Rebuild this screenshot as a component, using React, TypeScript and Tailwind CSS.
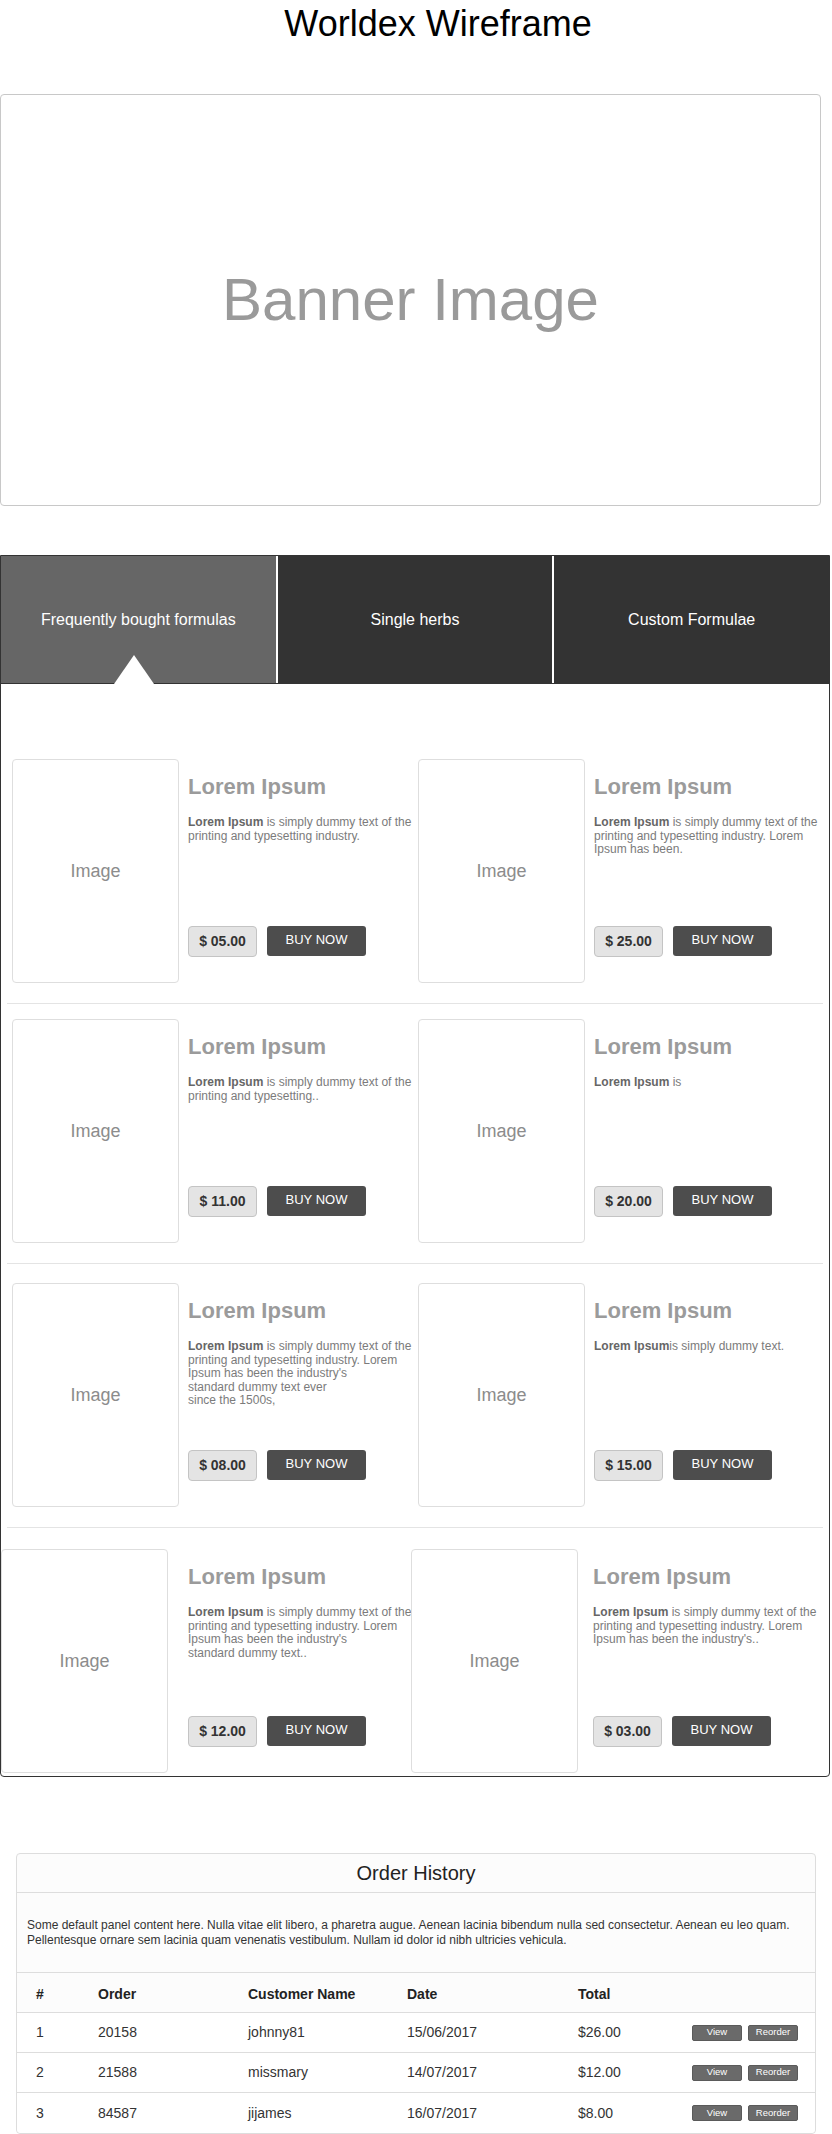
import React from 'react';

type Item = {
  price: string;
  body: React.ReactNode;
  imgCls: string;
  textCls: string;
};

type Row = {
  top: string;
  items: [Item, Item];
};

const L = 'ml-[11px]';
const T = 'ml-[9px]';

const rows: Row[] = [
  {
    top: 'mt-[75px]',
    items: [
      { price: '$ 05.00', imgCls: L, textCls: T, body: <> is simply dummy text of the printing and typesetting industry.</> },
      { price: '$ 25.00', imgCls: L, textCls: T, body: <> is simply dummy text of the printing and typesetting industry. Lorem Ipsum has been.</> },
    ],
  },
  {
    top: 'mt-[15px]',
    items: [
      { price: '$ 11.00', imgCls: L, textCls: T, body: <> is simply dummy text of the printing and typesetting..</> },
      { price: '$ 20.00', imgCls: L, textCls: T, body: <> is</> },
    ],
  },
  {
    top: 'mt-[19px]',
    items: [
      {
        price: '$ 08.00',
        imgCls: L,
        textCls: T,
        body: (
          <>
            {' '}is simply dummy text of the printing and typesetting industry. Lorem Ipsum has been the industry's
            <br />
            standard dummy text ever
            <br />
            since the 1500s,
          </>
        ),
      },
      { price: '$ 15.00', imgCls: L, textCls: T, body: <>is simply dummy text.</> },
    ],
  },
  {
    top: 'mt-[21px]',
    items: [
      {
        price: '$ 12.00',
        imgCls: 'ml-0',
        textCls: 'ml-[20px]',
        body: (
          <>
            {' '}is simply dummy text of the printing and typesetting industry. Lorem Ipsum has been the industry's
            <br />
            standard dummy text..
          </>
        ),
      },
      { price: '$ 03.00', imgCls: 'ml-[4px]', textCls: 'ml-[15px]', body: <> is simply dummy text of the printing and typesetting industry. Lorem Ipsum has been the industry's..</> },
    ],
  },
];

const orders = [
  { n: '1', order: '20158', name: 'johnny81', date: '15/06/2017', total: '$26.00' },
  { n: '2', order: '21588', name: 'missmary', date: '14/07/2017', total: '$12.00' },
  { n: '3', order: '84587', name: 'jijames', date: '16/07/2017', total: '$8.00' },
];

const Card = ({ item }: { item: Item }) => (
  <div className="flex">
    <div className={`${item.imgCls} flex h-[224px] w-[167px] shrink-0 items-center justify-center rounded-[4px] border border-[#dedede] text-[18px] text-[#8c8c8c]`}>
      Image
    </div>
    <div className={`${item.textCls} flex h-[224px] w-[232px] shrink-0 flex-col`}>
      <h3 className="mt-[16px] text-[22px] font-bold leading-[24px] text-[#9b9b9b]">Lorem Ipsum</h3>
      <p className="mt-[17px] text-[12px] leading-[13.5px] text-[#7b7b7b]">
        <b className="text-[#666]">Lorem Ipsum</b>
        {item.body}
      </p>
      <div className="mt-auto mb-[26px] flex items-start gap-[10px]">
        <span className="flex h-[31px] w-[69px] items-center justify-center rounded-[4px] border border-[#c4c4c4] bg-[#e4e4e4] text-[14px] font-bold text-[#333]">
          {item.price}
        </span>
        <span className="flex h-[30px] w-[99px] items-center justify-center rounded-[3px] bg-[#4d4d4d] pb-[2px] text-[13px] text-white">
          BUY NOW
        </span>
      </div>
    </div>
  </div>
);

export default function App() {
  return (
    <div className="w-[832px] bg-white font-['Liberation_Sans',Arial,sans-serif]">
      <h1 className="pt-[4px] pl-[44px] text-center text-[36px] leading-[40px] text-black">Worldex Wireframe</h1>

      {/* Banner */}
      <div className="mt-[50px] flex h-[412px] w-[821px] items-center justify-center rounded-[4px] border border-[#c8c8c8] text-[60px] text-[#9a9a9a]">
        Banner Image
      </div>

      {/* Products panel */}
      <div className="mt-[49px] w-[830px] rounded-b-[4px] border border-[#333]">
        <div className="grid grid-cols-3 gap-[2px] border-b border-[#333]">
          <div className="relative flex h-[127px] items-center justify-center bg-[#666] text-[16px] text-white">
            Frequently bought formulas
            <span className="absolute bottom-[-1px] left-[113px] h-0 w-0 border-x-[20px] border-b-[29px] border-x-transparent border-b-white" />
          </div>
          <div className="flex h-[127px] items-center justify-center bg-[#333] text-[16px] text-white">Single herbs</div>
          <div className="flex h-[127px] items-center justify-center bg-[#333] text-[16px] text-white">Custom Formulae</div>
        </div>

        <div className="pb-[3px]">
          {rows.map((row, i) => (
            <div key={i}>
              {i > 0 && <div className="mx-[6px] mt-[20px] h-px bg-[#e4e4e4]" />}
              <div className={`${row.top} grid grid-cols-[406px_1fr]`}>
                <Card item={row.items[0]} />
                <Card item={row.items[1]} />
              </div>
            </div>
          ))}
        </div>
      </div>

      {/* Order history */}
      <div className="mt-[76px] ml-[16px] w-[800px] rounded-[4px] border border-[#ddd] bg-[#fcfcfc]">
        <div className="flex h-[39px] items-center justify-center border-b border-[#ddd] text-[20px] text-[#222]">Order History</div>
        <p className="px-[10px] pt-[25px] pb-[25px] text-[12px] leading-[14.5px] text-[#333]">
          Some default panel content here. Nulla vitae elit libero, a pharetra augue. Aenean lacinia bibendum nulla sed consectetur. Aenean eu leo quam.
          <br />
          Pellentesque ornare sem lacinia quam venenatis vestibulum. Nullam id dolor id nibh ultricies vehicula.
        </p>
        <div className="grid h-[41px] grid-cols-[62px_150px_159px_171px_114px_1fr] items-center border-y border-[#ddd] pt-[3px] pl-[19px] text-[14px] font-bold text-[#222]">
          <span>#</span>
          <span>Order</span>
          <span>Customer Name</span>
          <span>Date</span>
          <span>Total</span>
          <span />
        </div>
        {orders.map((o, i) => (
          <div
            key={o.n}
            className={`grid h-[40px] grid-cols-[62px_150px_159px_171px_114px_1fr] items-center bg-white pl-[19px] text-[14px] text-[#333] ${i < orders.length - 1 ? 'border-b border-[#ddd]' : 'rounded-b-[4px]'}`}
          >
            <span>{o.n}</span>
            <span>{o.order}</span>
            <span>{o.name}</span>
            <span>{o.date}</span>
            <span>{o.total}</span>
            <span className="flex gap-[6px]">
              <span className="flex h-[16px] w-[50px] items-center justify-center rounded-[2px] border border-[#5a5a5a] bg-[#6a6a6a] text-[9.5px] text-white">View</span>
              <span className="flex h-[16px] w-[50px] items-center justify-center rounded-[2px] border border-[#5a5a5a] bg-[#6a6a6a] text-[9.5px] text-white">Reorder</span>
            </span>
          </div>
        ))}
      </div>
    </div>
  );
}
